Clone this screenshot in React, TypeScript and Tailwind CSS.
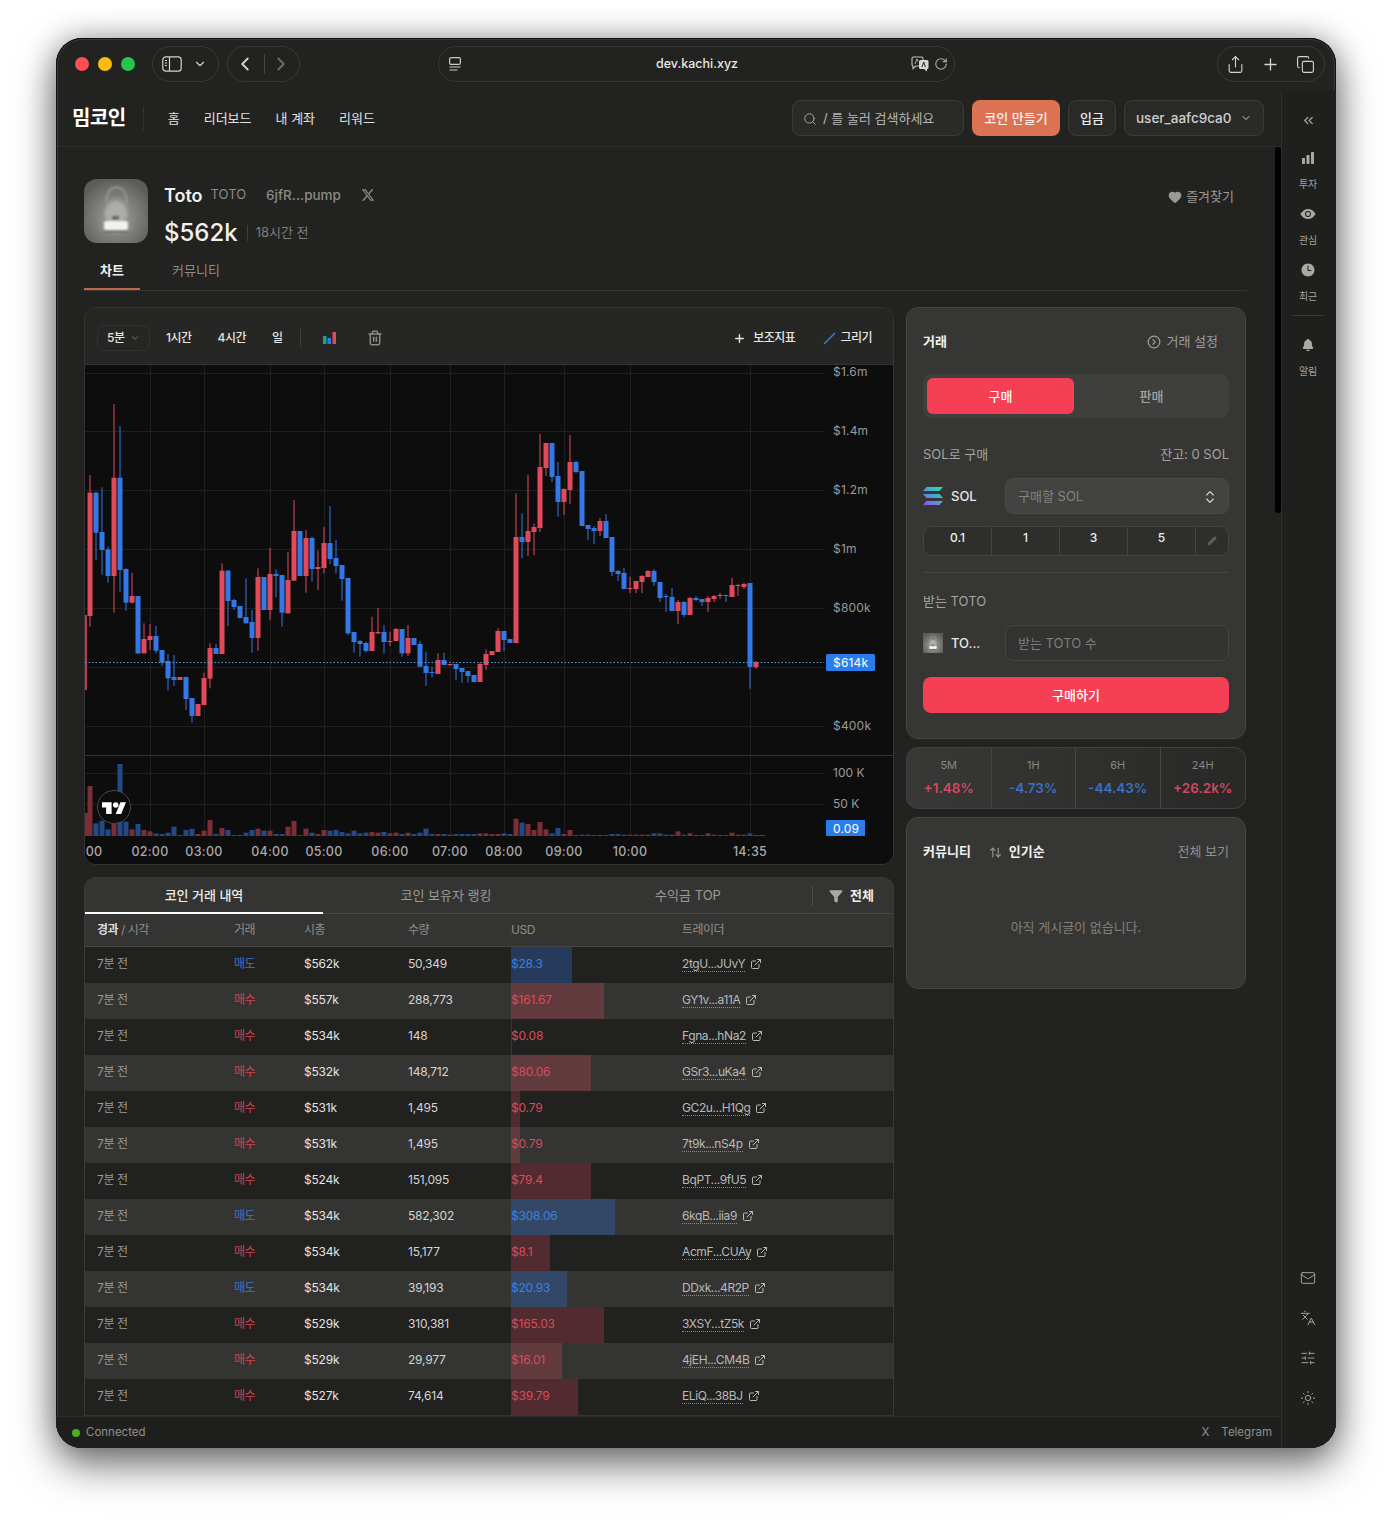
import { useId } from "react";
import {
  ArrowUpDown,
  ChevronDown,
  ChevronLeft,
  ChevronRight,
  ChevronsLeft,
  ChevronsUpDown,
  CircleChevronRight,
  Copy,
  ExternalLink,
  Filter,
  Heart,
  Languages,
  Mail,
  Pencil,
  Plus,
  RotateCw,
  Search,
  Share,
  SlidersHorizontal,
  Sun,
  Trash2,
} from "lucide-react";
import { FaXTwitter } from "react-icons/fa6";
import { IoEye, IoNotifications, IoTime } from "react-icons/io5";

// chart values are taken from a 3x crop: y is (real y - 360) * 3
// [dir, wickTop, bodyTop, bodyBottom, wickBottom, volumeTop]
type Candle = ["r" | "b", number, number, number, number, number];

const candles: Candle[] = [
  ["r", 345, 398, 768, 800, 1278],
  ["b", 395, 398, 518, 600, 1390],
  ["b", 382, 516, 570, 645, 1382],
  ["b", 560, 568, 648, 668, 1408],
  ["r", 132, 353, 648, 758, 1390],
  ["b", 198, 353, 630, 695, 1212],
  ["b", 625, 627, 728, 752, 1385],
  ["r", 638, 708, 728, 730, 1408],
  ["b", 708, 708, 880, 882, 1392],
  ["r", 790, 837, 880, 880, 1410],
  ["r", 792, 828, 840, 870, 1414],
  ["b", 798, 828, 872, 880, 1420],
  ["b", 870, 870, 908, 918, 1422],
  ["b", 882, 903, 955, 992, 1418],
  ["b", 885, 951, 960, 978, 1400],
  ["r", 951, 951, 960, 960, 1425],
  ["b", 950, 951, 1017, 1050, 1410],
  ["b", 1014, 1014, 1068, 1088, 1406],
  ["r", 1032, 1032, 1068, 1068, 1422],
  ["r", 938, 954, 1035, 1035, 1412],
  ["r", 850, 864, 956, 985, 1380],
  ["b", 852, 864, 882, 882, 1422],
  ["r", 610, 632, 882, 882, 1404],
  ["b", 630, 632, 723, 798, 1410],
  ["b", 717, 720, 741, 750, 1425],
  ["b", 738, 738, 774, 775, 1425],
  ["b", 655, 771, 790, 790, 1418],
  ["b", 750, 786, 834, 878, 1410],
  ["r", 625, 651, 834, 872, 1406],
  ["b", 651, 651, 750, 750, 1412],
  ["r", 564, 642, 750, 780, 1412],
  ["b", 628, 642, 648, 712, 1422],
  ["b", 645, 645, 758, 800, 1422],
  ["r", 576, 660, 760, 760, 1400],
  ["r", 420, 513, 662, 662, 1383],
  ["b", 513, 513, 648, 648, 1425],
  ["r", 510, 534, 648, 698, 1406],
  ["b", 530, 534, 627, 665, 1418],
  ["r", 572, 621, 627, 690, 1422],
  ["r", 501, 549, 624, 640, 1410],
  ["b", 438, 549, 597, 612, 1412],
  ["b", 540, 594, 618, 640, 1410],
  ["b", 615, 615, 657, 722, 1416],
  ["b", 654, 654, 820, 825, 1420],
  ["b", 816, 816, 846, 878, 1412],
  ["b", 840, 843, 852, 890, 1420],
  ["b", 846, 849, 873, 878, 1418],
  ["r", 770, 816, 873, 873, 1416],
  ["r", 744, 816, 820, 822, 1418],
  ["b", 795, 816, 846, 880, 1416],
  ["r", 815, 843, 846, 858, 1420],
  ["r", 804, 807, 843, 843, 1418],
  ["b", 807, 807, 880, 890, 1422],
  ["r", 795, 834, 880, 888, 1418],
  ["b", 834, 834, 855, 855, 1422],
  ["b", 843, 852, 920, 922, 1418],
  ["b", 875, 918, 939, 978, 1406],
  ["b", 920, 936, 939, 952, 1422],
  ["r", 880, 900, 942, 942, 1422],
  ["b", 878, 900, 915, 915, 1422],
  ["r", 912, 912, 915, 918, 1424],
  ["b", 912, 912, 927, 960, 1422],
  ["b", 924, 924, 936, 968, 1422],
  ["b", 933, 933, 948, 968, 1422],
  ["b", 945, 945, 966, 966, 1422],
  ["r", 908, 912, 966, 966, 1420],
  ["r", 868, 882, 915, 930, 1420],
  ["r", 873, 873, 885, 885, 1422],
  ["r", 805, 813, 876, 876, 1422],
  ["b", 813, 813, 840, 873, 1420],
  ["b", 837, 837, 849, 849, 1422],
  ["r", 400, 531, 849, 849, 1376],
  ["b", 460, 531, 546, 595, 1388],
  ["r", 345, 513, 546, 588, 1392],
  ["r", 490, 501, 516, 585, 1410],
  ["r", 222, 321, 504, 516, 1386],
  ["r", 249, 249, 324, 348, 1408],
  ["b", 249, 249, 351, 366, 1420],
  ["b", 306, 348, 426, 470, 1404],
  ["r", 385, 387, 426, 465, 1422],
  ["r", 225, 306, 390, 432, 1410],
  ["b", 303, 306, 336, 339, 1425],
  ["b", 333, 333, 498, 498, 1424],
  ["b", 495, 495, 507, 540, 1424],
  ["b", 498, 504, 513, 552, 1425],
  ["r", 474, 483, 513, 528, 1425],
  ["b", 462, 483, 534, 534, 1425],
  ["b", 531, 531, 636, 648, 1422],
  ["b", 630, 633, 642, 663, 1422],
  ["b", 624, 639, 687, 687, 1424],
  ["r", 650, 684, 687, 699, 1424],
  ["r", 663, 663, 687, 699, 1424],
  ["r", 645, 648, 666, 699, 1424],
  ["r", 630, 633, 651, 651, 1424],
  ["b", 627, 633, 666, 678, 1420],
  ["b", 666, 666, 714, 726, 1420],
  ["b", 702, 708, 711, 756, 1424],
  ["b", 684, 711, 753, 753, 1424],
  ["r", 720, 726, 753, 792, 1414],
  ["b", 723, 726, 765, 771, 1424],
  ["r", 711, 714, 765, 765, 1420],
  ["b", 708, 714, 720, 723, 1425],
  ["b", 717, 717, 726, 738, 1425],
  ["r", 708, 714, 726, 756, 1420],
  ["r", 705, 708, 717, 726, 1424],
  ["r", 699, 705, 708, 717, 1425],
  ["b", 705, 705, 708, 726, 1425],
  ["r", 654, 675, 711, 711, 1418],
  ["r", 672, 675, 678, 708, 1424],
  ["r", 669, 672, 681, 687, 1424],
  ["b", 669, 669, 921, 986, 1420],
  ["r", 903, 906, 921, 927, 1425],
];

const trades = [
  ["매도", "$562k", "50,349", "$28.3", 61, "2tgU...JUvY"],
  ["매수", "$557k", "288,773", "$161.67", 93, "GY1v...a11A"],
  ["매수", "$534k", "148", "$0.08", 1, "Fgna...hNa2"],
  ["매수", "$532k", "148,712", "$80.06", 80, "GSr3...uKa4"],
  ["매수", "$531k", "1,495", "$0.79", 9, "GC2u...H1Qg"],
  ["매수", "$531k", "1,495", "$0.79", 9, "7t9k...nS4p"],
  ["매수", "$524k", "151,095", "$79.4", 80, "BqPT...9fU5"],
  ["매도", "$534k", "582,302", "$308.06", 104, "6kqB...iia9"],
  ["매수", "$534k", "15,177", "$8.1", 39, "AcmF...CUAy"],
  ["매도", "$534k", "39,193", "$20.93", 56, "DDxk...4R2P"],
  ["매수", "$529k", "310,381", "$165.03", 93, "3XSY...tZ5k"],
  ["매수", "$529k", "29,977", "$16.01", 51, "4jEH...CM4B"],
  ["매수", "$527k", "74,614", "$39.79", 67, "ELiQ...38BJ"],
] as const;

const stats = [
  ["5M", "+1.48%", "text-[#d2485f]"],
  ["1H", "-4.73%", "text-[#3c6fc4]"],
  ["6H", "-44.43%", "text-[#3c6fc4]"],
  ["24H", "+26.2k%", "text-[#d2485f]"],
];

const priceLabels: [string, number][] = [
  ["$1.6m", 372],
  ["$1.4m", 431],
  ["$1.2m", 490],
  ["$1m", 549],
  ["$800k", 608],
  ["$400k", 726],
];
const timeLabels: [string, number][] = [
  ["00", 94],
  ["02:00", 150],
  ["03:00", 204],
  ["04:00", 270],
  ["05:00", 324],
  ["06:00", 390],
  ["07:00", 450],
  ["08:00", 504],
  ["09:00", 564],
  ["10:00", 630],
  ["14:35", 750],
];
const gridX = [150, 204, 270, 324, 390, 450, 504, 564, 630, 750];
const gridY = [373, 431, 490, 549, 608, 667, 726];

const toX = (zx: number) => 84 + zx / 3 - 85;
const toY = (zy: number) => zy / 3 - 5;

function Chart() {
  return (
    <svg width="808" height="499" className="block bg-[#0d0d0e]">
      {gridY.map((y) => (
        <line key={y} x1="0" x2="739" y1={y - 364.5} y2={y - 364.5} stroke="#1f1f20" />
      ))}
      {[773, 804].map((y) => (
        <line key={y} x1="0" x2="739" y1={y - 364.5} y2={y - 364.5} stroke="#1f1f20" />
      ))}
      {gridX.map((x) => (
        <line key={x} x1={x - 84.5} x2={x - 84.5} y1="0" y2="471" stroke="#1f1f20" />
      ))}
      <line x1="0" x2="808" y1="390.5" y2="390.5" stroke="#333334" />

      {/* cut off first candle at the left edge */}
      <rect x="0" y="250" width="2" height="75" fill="#e24a5c" opacity="0.8" />
      <rect x="0" y="448" width="3" height="23" fill="#7a2f37" />

      {candles.map(([dir, wt, bt, bb, wb, vt], i) => {
        const zx = 19 + i * 18;
        const x = Math.round(toX(zx));
        const fill = dir === "r" ? "#e24a5c" : "#3378e6";
        return (
          <g key={i}>
            <rect x={x - 0.5} y={toY(wt)} width="1" height={(wb - wt) / 3} fill={fill} />
            <rect x={x - 2.5} y={toY(bt)} width="5" height={Math.max((bb - bt) / 3, 1)} fill={fill} />
            <rect
              x={x - 2.5}
              y={toY(vt)}
              width="5"
              height={(1428 - vt) / 3}
              fill={dir === "r" ? "#7a2f37" : "#224a85"}
            />
          </g>
        );
      })}
      <rect x="674" y="470" width="6" height="1" fill="#224a85" />

      <line x1="0" x2="739" y1="297.5" y2="297.5" stroke="#5aa0dc" strokeDasharray="1.5 2" />

      {priceLabels.map(([t, y]) => (
        <text key={t} x="748" y={y - 365 + 4} fill="#9a9a9a" fontSize="12" letterSpacing="0.2">
          {t}
        </text>
      ))}
      <rect x="741" y="289" width="49" height="17" rx="1.5" fill="#2a7de9" />
      <text x="748" y="302" fill="#fff" fontSize="12" letterSpacing="0.2">
        $614k
      </text>
      <text x="748" y="412" fill="#9a9a9a" fontSize="12">
        100 K
      </text>
      <text x="748" y="443" fill="#9a9a9a" fontSize="12">
        50 K
      </text>
      <rect x="741" y="455" width="39" height="16" fill="#2a7de9" />
      <text x="748" y="468" fill="#fff" fontSize="12" letterSpacing="0.2">
        0.09
      </text>

      {timeLabels.map(([t, x]) => (
        <text
          key={t}
          x={x - 85}
          y="491"
          fill="#a8a8a8"
          fontSize="12.5"
          fontWeight="500"
          letterSpacing="0.3"
          textAnchor="middle"
        >
          {t}
        </text>
      ))}

      {/* tradingview mark */}
      <circle cx="29" cy="442" r="16.5" fill="#0d0d0e" stroke="#4a4a4c" />
      <svg x="17" y="436" width="24" height="13" viewBox="0 0 35 19">
        <path d="M14 2H0v7.5h6V19h8V2z" fill="#fff" />
        <path d="M28 19h-8l7-17h8l-7 17z" fill="#fff" />
        <circle cx="20" cy="6" r="4" fill="#fff" />
      </svg>
    </svg>
  );
}

// token picture: a blurry grey shape on grey
function TokenAvatar({ size, radius }: { size: number; radius: number }) {
  const id = useId();
  return (
    <svg width={size} height={size} viewBox="0 0 64 64" className="shrink-0">
      <defs>
        <radialGradient id={`${id}bg`} cx="50%" cy="60%" r="62%">
          <stop offset="0" stopColor="#a4a4a0" />
          <stop offset="0.55" stopColor="#7c7c78" />
          <stop offset="1" stopColor="#5c5c58" />
        </radialGradient>
        <filter id={`${id}blur`}>
          <feGaussianBlur stdDeviation="1.6" />
        </filter>
        <filter id={`${id}soft`}>
          <feGaussianBlur stdDeviation="0.8" />
        </filter>
        <clipPath id={`${id}clip`}>
          <rect width="64" height="64" rx={radius} />
        </clipPath>
      </defs>
      <g clipPath={`url(#${id}clip)`}>
        <rect width="64" height="64" fill={`url(#${id}bg)`} />
        <g filter={`url(#${id}blur)`}>
          <path d="M23 22c5-5 14-5 19 0l6 30H16z" fill="#8f8f8b" opacity="0.75" />
          <ellipse cx="32" cy="34" rx="11" ry="12" fill="#b5b5b1" opacity="0.75" />
        </g>
        <g filter={`url(#${id}soft)`}>
          <path d="M22 24C22 3 43 3 43 24" fill="none" stroke="#a3a39f" strokeWidth="1.4" />
          <rect x="28" y="37" width="7" height="4" fill="#6a6a66" />
          <rect x="20" y="42" width="24" height="9" rx="2" fill="#f2f2ef" />
          <rect x="20" y="51" width="24" height="1.500" fill="#55554f" />
        </g>
      </g>
    </svg>
  );
}

function SolanaIcon() {
  const id = useId();
  return (
    <svg width="20" height="20" viewBox="0 0 20 20" className="shrink-0">
      <defs>
        <linearGradient id={id} x1="0" y1="1" x2="1" y2="0">
          <stop offset="0" stopColor="#9945ff" />
          <stop offset="0.5" stopColor="#4e9fd6" />
          <stop offset="1" stopColor="#14f195" />
        </linearGradient>
      </defs>
      <path d="M3.5 1H20l-3.5 4H0z M0 8h16.5l3.5 4H3.5z M3.5 15H20l-3.5 4H0z" fill={`url(#${id})`} />
    </svg>
  );
}

function BarsIcon({ className }: { className?: string }) {
  return (
    <svg width="14" height="14" viewBox="0 0 14 14" className={className} fill="currentColor">
      <rect x="1" y="7" width="3" height="6" rx="0.7" />
      <rect x="5.5" y="4" width="3" height="9" rx="0.7" />
      <rect x="10" y="1" width="3" height="12" rx="0.7" />
    </svg>
  );
}

function SidebarIcon() {
  return (
    <svg width="20" height="16" viewBox="0 0 20 16" fill="none" stroke="currentColor" strokeWidth="1.2">
      <rect x="0.8" y="0.8" width="18.400" height="14.400" rx="3" />
      <path d="M7.500 1v14" />
      <path d="M3 4.500h2M3 7h2M3 9.500h2" strokeWidth="1" />
    </svg>
  );
}

function PageMenuIcon() {
  return (
    <svg width="14" height="16" viewBox="0 0 14 16" fill="none" stroke="#c9c9c7" strokeWidth="1.2">
      <rect x="1.6" y="1.6" width="10.8" height="6.8" rx="1.5" />
      <path d="M1.5 11h11M1.5 14h8" />
    </svg>
  );
}

function TranslateIcon() {
  return (
    <svg width="20" height="16" viewBox="0 0 20 16">
      <path d="M2 2.5a1.5 1.5 0 0 1 1.5-1.5h8A1.5 1.5 0 0 1 13 2.5v6A1.5 1.5 0 0 1 11.5 10H6l-3 2.5V10A1.500 1.500 0 0 1 2 8.500z" fill="none" stroke="#c2c2c0" strokeWidth="1.1" />
      <path d="M9 5.500a1.5 1.5 0 0 1 1.5-1.500H17a1.500 1.500 0 0 1 1.500 1.500v6A1.500 1.500 0 0 1 17 13v2.500L14 13h-3.500A1.500 1.500 0 0 1 9 11.500z" fill="#d6d6d4" />
      <path d="M12 11l1.700-5 1.700 5" fill="none" stroke="#222220" strokeWidth="1" />
      <path d="M5 8l2-5 1 2.500" fill="none" stroke="#c2c2c0" strokeWidth="0.9" />
    </svg>
  );
}

function SideItem({ icon, label }: { icon: React.ReactNode; label: string }) {
  return (
    <div className="flex h-14 flex-col items-center pt-[5px] text-[#a9a9a6]">
      <div className="flex h-[16px] items-center">{icon}</div>
      <span className="mt-[12px] text-[10px] leading-[12px] tracking-[-0.3px] text-[#a3a3a0]">{label}</span>
    </div>
  );
}

function TradeRow({ row, odd }: { row: (typeof trades)[number]; odd: boolean }) {
  const [side, mcap, qty, usd, bar, trader] = row;
  const isBuy = side === "매수";
  return (
    <div
      className={`grid h-9 grid-cols-[137px_70px_104px_103px_171px_1fr] items-center pl-3 text-[12px] tracking-[-0.2px] ${
        odd ? "bg-[#343432]" : "bg-[#212120]"
      }`}
    >
      <span className="mb-[2px] tracking-[-0.4px] text-[#9a9a97]">7분 전</span>
      <span className={`mb-[2px] tracking-[-0.5px] ${isBuy ? "text-[#c9444f]" : "text-[#3c74c8]"}`}>{side}</span>
      <span className="mb-[2px] text-[#e4e4e2]">{mcap}</span>
      <span className="mb-[2px] text-[#d4d4d2]">{qty}</span>
      <div className="relative flex h-full items-center pb-[2px]">
        <div
          className={`absolute inset-y-0 left-0 ${isBuy ? "bg-[#e24a5c]/25" : "bg-[#3378e6]/30"}`}
          style={{ width: bar }}
        />
        <span className={`relative ${isBuy ? "text-[#dd4a5a]" : "text-[#3c7fe0]"}`}>{usd}</span>
      </div>
      <div className="mb-[2px] flex items-center gap-[5px] tracking-[-0.4px] text-[#b9b9b6]">
        <span className="border-b border-dotted border-[#8a8a87] leading-[14px]">{trader}</span>
        <ExternalLink size={12} />
      </div>
    </div>
  );
}

export default function App() {
  return (
    <div className="h-[1522px] w-[1392px] overflow-hidden bg-white pl-[56px] pt-[38px] font-['Inter','Noto_Sans_CJK_KR',sans-serif]">
      <div className="flex h-[1410px] w-[1280px] flex-col overflow-hidden rounded-[26px] bg-[#222220] shadow-[inset_0_0_0_1px_#0f0f0f,inset_0_0_0_2px_#3a3a38,0_18px_40px_rgba(0,0,0,0.5),0_0_30px_rgba(0,0,0,0.3)]">
        {/* browser chrome */}
        <div className="flex h-[52px] shrink-0 items-center text-[#d4d4d2]">
          <div className="ml-[19px] flex gap-[9px]">
            <span className="size-[14px] rounded-full bg-[#fb5056]" />
            <span className="size-[14px] rounded-full bg-[#fcbc0f]" />
            <span className="size-[14px] rounded-full bg-[#28c44e]" />
          </div>
          <div className="ml-[17px] flex h-9 w-[67px] items-center rounded-full border border-[#393937] pl-[9px]">
            <SidebarIcon />
            <ChevronDown size={14} className="ml-[11px]" />
          </div>
          <div className="ml-2 flex h-9 w-[73px] items-center rounded-full border border-[#393937] pl-[6px]">
            <ChevronLeft size={22} />
            <span className="ml-[8px] mr-[5px] h-[20px] w-px bg-[#454543]" />
            <ChevronRight size={22} className="text-[#6f6f6d]" />
          </div>
          <div className="ml-[138px] flex h-9 w-[517px] items-center rounded-full border border-[#393937] pl-[9px] pr-[6px]">
            <PageMenuIcon />
            <span className="flex-1 pl-[22px] pt-px text-center text-[12.5px] font-medium text-[#e8e8e6]">dev.kachi.xyz</span>
            <TranslateIcon />
            <RotateCw size={14} className="ml-[4px] text-[#a8a8a6]" />
          </div>
          <div className="ml-auto mr-[11px] flex h-9 w-[108px] items-center justify-between rounded-full border border-[#393937] pl-[8px] pr-[9px]">
            <Share size={19} strokeWidth={1.4} />
            <Plus size={19} strokeWidth={1.6} />
            <Copy size={19} strokeWidth={1.4} />
          </div>
        </div>

        <div className="flex min-h-0 flex-1">
          <div className="flex min-w-0 flex-1 flex-col">
            {/* site nav */}
            <div className="flex h-[57px] shrink-0 items-center border-b border-[#2e2e2c] pl-4 pr-[17px]">
              <span className="text-[20px] font-bold tracking-[-0.5px] text-white">밈코인</span>
              <span className="ml-[17px] h-6 w-px bg-[#333331]" />
              <nav className="ml-6 mt-[2px] flex gap-6 text-[13px] text-[#e2e2e0]">
                <span>홈</span>
                <span>리더보드</span>
                <span>내 계좌</span>
                <span>리워드</span>
              </nav>
              <div className="ml-auto flex items-center gap-2">
                <div className="flex h-9 w-[172px] items-center gap-[6px] rounded-lg border border-[#393937] bg-[#2a2a28] pl-[10px] pt-px text-[13px] text-[#b5b5b3]">
                  <Search size={14} strokeWidth={1.5} />
                  <span>/ 를 눌러 검색하세요</span>
                </div>
                <div className="flex h-9 w-[88px] items-center justify-center rounded-lg bg-[#db7353] pt-px text-[13px] font-medium text-[#fdf0ea]">
                  코인 만들기
                </div>
                <div className="flex h-9 w-12 items-center justify-center rounded-lg border border-[#393937] bg-[#2a2a28] pt-px text-[13px] font-medium text-[#ededeb]">
                  입금
                </div>
                <div className="flex h-9 w-[140px] items-center gap-[9px] rounded-lg border border-[#393937] bg-[#2a2a28] pl-[11px] text-[13.5px] font-medium text-[#cfcfcd]">
                  <span>user_aafc9ca0</span>
                  <ChevronDown size={12} />
                </div>
              </div>
            </div>

            {/* page */}
            <div className="relative min-h-0 flex-1 overflow-hidden pl-7 pr-[34px] pt-8">
              <div className="absolute right-0 top-0 h-[366px] w-[6px] rounded-full bg-black" />

              <div className="flex h-16 items-start gap-4">
                <TokenAvatar size={64} radius={13} />
                <div className="flex flex-col">
                  <div className="flex h-8 items-center">
                    <span className="text-[18px] font-semibold text-[#f0f0ee]">Toto</span>
                    <span className="ml-[8px] text-[13px] text-[#8a8a87]">TOTO</span>
                    <span className="ml-5 text-[13.5px] font-medium text-[#8a8a87]">6jfR...pump</span>
                    <FaXTwitter size={14} className="ml-5 text-[#8a8a87]" />
                  </div>
                  <div className="mt-2 flex h-7 items-center">
                    <span className="text-[24px] font-medium leading-none text-[#f0f0ee]">$562k</span>
                    <span className="ml-[9px] h-[16px] w-px bg-[#3f3f3d]" />
                    <span className="ml-2 text-[13px] text-[#7e7e7b]">18시간 전</span>
                  </div>
                </div>
                <div className="ml-auto mr-[13px] mt-2 flex items-center gap-[4px] text-[13px] text-[#9a9a97]">
                  <Heart size={14} fill="currentColor" />
                  <span>즐겨찾기</span>
                </div>
              </div>

              <div className="mt-[19px] flex h-[29px] items-start border-b border-[#353533] text-[13px] leading-4">
                <div className="h-[28px] w-14 border-b-2 border-[#c4664d] text-center font-semibold text-[#efefed]">
                  차트
                </div>
                <div className="ml-8 text-[#8a8a87]">커뮤니티</div>
              </div>

              <div className="mt-4 flex items-start gap-3">
                <div className="flex w-[810px] shrink-0 flex-col gap-3">
                  {/* chart */}
                  <div className="overflow-hidden rounded-xl border border-[#343432]">
                    <div className="flex h-[57px] items-center border-b border-[#333331] bg-[#262624] pl-3 pr-[21px] pt-1 text-[12px] font-medium tracking-[-0.5px] text-[#e4e4e2]">
                      <div className="flex h-[26px] w-[53px] items-center gap-[6px] rounded-lg border border-[#333331] pl-[9px]">
                        5분
                        <ChevronDown size={10} className="text-[#8a8a87]" />
                      </div>
                      <span className="ml-4">1시간</span>
                      <span className="ml-[26px]">4시간</span>
                      <span className="ml-[26px]">일</span>
                      <span className="ml-[17px] h-[18px] w-px bg-[#3f3f3d]" />
                      <svg width="13" height="12" viewBox="0 0 13 12" className="ml-[22px]">
                        <rect x="0" y="4" width="3.500" height="8" fill="#1f9e8a" />
                        <rect x="4.500" y="6" width="3.500" height="6" fill="#3378e6" />
                        <rect x="9.500" y="0" width="3.500" height="12" fill="#e24a5c" />
                      </svg>
                      <Trash2 size={16} strokeWidth={2.2} className="ml-[31px] text-[#8a8a87]" />
                      <div className="ml-auto flex items-center gap-[7px]">
                        <Plus size={13} strokeWidth={2.6} />
                        보조지표
                      </div>
                      <div className="ml-7 flex items-center gap-[4px]">
                        <svg width="13" height="13" viewBox="0 0 13 13">
                          <path d="M1 12 12 1" stroke="#2f7fe0" strokeWidth="1.5" />
                        </svg>
                        그리기
                      </div>
                    </div>
                    <Chart />
                  </div>

                  {/* trades */}
                  <div className="overflow-hidden rounded-t-xl border-x border-t border-[#3a3a38] bg-[#343432]">
                    <div className="flex h-[36px] items-center border-b border-[#454543] pt-px text-[13px] text-[#9a9a97]">
                      <div className="relative flex h-full w-[238px] items-center justify-center font-medium text-[#ececea]">
                        코인 거래 내역
                        <span className="absolute inset-x-0 -bottom-px h-[2px] bg-white" />
                      </div>
                      <div className="flex h-full w-[246px] items-center justify-center">코인 보유자 랭킹</div>
                      <div className="flex h-full w-[238px] items-center justify-center">수익금 TOP</div>
                      <span className="ml-[5px] h-[20px] w-px bg-[#4c4c4a]" />
                      <Filter size={14} fill="#a8a8a6" className="ml-[16px] text-[#a8a8a6]" />
                      <span className="ml-[7px] font-semibold text-[#ececea]">전체</span>
                    </div>
                    <div className="grid h-[33px] grid-cols-[137px_70px_104px_103px_171px_1fr] items-center border-b border-[#454543] pl-3 text-[12px] tracking-[-0.5px] text-[#8f8f8c]">
                      <span>
                        <b className="font-semibold text-[#dededc]">경과</b> / 시각
                      </span>
                      <span>거래</span>
                      <span>시총</span>
                      <span>수량</span>
                      <span>USD</span>
                      <span>트레이더</span>
                    </div>
                    {trades.map((row, i) => (
                      <TradeRow key={i} row={row} odd={i % 2 === 1} />
                    ))}
                    <div className="h-4 bg-[#343432]" />
                  </div>
                </div>

                {/* right column */}
                <div className="flex w-[340px] shrink-0 flex-col gap-2">
                  <div className="rounded-xl border border-[#454543] bg-[#363634] px-4 pb-[25px] text-[13px]">
                    <div className="flex h-[66px] items-center justify-between pr-[11px] pt-[2px]">
                      <span className="font-semibold text-[#f0f0ee]">거래</span>
                      <div className="flex items-center gap-[6px] text-[#9f9f9c]">
                        <CircleChevronRight size={14} />
                        거래 설정
                      </div>
                    </div>
                    <div className="flex h-11 items-center rounded-lg bg-[#3f3f3d] p-1">
                      <div className="flex h-9 w-[147px] items-center justify-center rounded-md bg-[#f43f55] pt-px font-medium text-white">
                        구매
                      </div>
                      <div className="flex-1 pl-1 pt-px text-center font-medium text-[#a3a3a0]">판매</div>
                    </div>
                    <div className="mt-[27px] flex h-[18px] items-center justify-between pt-[2px] text-[#a3a3a0]">
                      <span>SOL로 구매</span>
                      <span>잔고: 0 SOL</span>
                    </div>
                    <div className="mt-[15px] flex h-9 items-center">
                      <SolanaIcon />
                      <span className="ml-2 w-[54px] pt-px font-medium text-[#e8e8e6]">SOL</span>
                      <div className="flex h-9 flex-1 items-center justify-between rounded-lg border border-[#4a4a48] bg-[#424240] pl-3 pr-[10px] pt-px text-[#84847f]">
                        구매할 SOL
                        <ChevronsUpDown size={16} strokeWidth={1.6} className="text-[#dcdcda]" />
                      </div>
                    </div>
                    <div className="mt-3 flex h-[30px] rounded-lg border border-[#444442] bg-[#2e2e2c] text-[12px] font-medium text-[#ededeb]">
                      {["0.1", "1", "3", "5"].map((v) => (
                        <div key={v} className="w-[68px] border-r border-[#444442] pt-[2px] text-center">
                          {v}
                        </div>
                      ))}
                      <div className="flex flex-1 items-center justify-center">
                        <Pencil size={10} fill="#5f5f5c" className="text-[#5f5f5c]" />
                      </div>
                    </div>
                    <div className="mt-4 border-t border-[#444442]" />
                    <div className="mt-5 h-4 leading-4 text-[#a3a3a0]">받는 TOTO</div>
                    <div className="mt-4 flex h-9 items-center">
                      <TokenAvatar size={20} radius={0} />
                      <span className="ml-2 w-[54px] pt-px font-medium text-[#e8e8e6]">TO...</span>
                      <div className="flex h-9 flex-1 items-center rounded-lg border border-[#454543] bg-[#333331] pl-3 pt-px text-[#7d7d79]">
                        받는 TOTO 수
                      </div>
                    </div>
                    <div className="mt-4 flex h-9 items-center justify-center rounded-lg bg-[#f43f55] pt-px font-medium text-white">
                      구매하기
                    </div>
                  </div>

                  <div className="grid h-[62px] grid-cols-4 overflow-hidden rounded-xl border border-[#414141] bg-linear-to-r from-[#383836] to-[#282826]">
                    {stats.map(([k, v, color], i) => (
                      <div
                        key={k}
                        className={`flex flex-col items-center pt-[10px] ${i < 3 ? "border-r border-[#454543]" : ""}`}
                      >
                        <span className="text-[11px] leading-[14px] text-[#878784]">{k}</span>
                        <span className={`mt-[7px] text-[13.5px] font-semibold leading-[18px] ${color}`}>{v}</span>
                      </div>
                    ))}
                  </div>

                  <div className="h-[172px] rounded-xl border border-[#454543] bg-[#363634] px-4 text-[13px]">
                    <div className="flex h-[66px] items-center pt-[2px]">
                      <span className="font-semibold text-[#f0f0ee]">커뮤니티</span>
                      <ArrowUpDown size={13} className="ml-[18px] text-[#9a9a97]" />
                      <span className="ml-[7px] font-semibold text-[#f0f0ee]">인기순</span>
                      <span className="ml-auto text-[#8f8f8c]">전체 보기</span>
                    </div>
                    <div className="mt-[34px] text-center text-[#80807d]">아직 게시글이 없습니다.</div>
                  </div>
                </div>
              </div>
            </div>

            {/* status bar */}
            <div className="flex h-8 shrink-0 items-center border-t border-[#2c2c2a] bg-[#1f1f1d] pl-4 pr-[9px] text-[11.5px] text-[#8f8f8c]">
              <span className="size-2 rounded-full bg-[#4caf1f]" />
              <span className="ml-[6px]">Connected</span>
              <span className="ml-auto">X</span>
              <span className="ml-3">Telegram</span>
            </div>
          </div>

          {/* right rail */}
          <aside className="flex w-[55px] shrink-0 flex-col items-center rounded-tl-sm border-l border-[#2e2e2c] bg-[#1f1f1d] pb-[42px] pr-[2px] pt-[23px] text-[#a9a9a6]">
            <ChevronsLeft size={15} />
            <div className="mt-[17px]">
              <SideItem icon={<BarsIcon />} label="투자" />
              <SideItem icon={<IoEye size={16} />} label="관심" />
              <SideItem icon={<IoTime size={16} />} label="최근" />
            </div>
            <div className="my-[2px] h-px w-8 bg-[#3a3a38]" />
            <div className="mt-[14px]">
              <SideItem icon={<IoNotifications size={14} />} label="알림" />
            </div>
            <div className="mt-auto flex flex-col items-center gap-6">
              <Mail size={16} strokeWidth={1.4} />
              <Languages size={16} strokeWidth={1.4} />
              <SlidersHorizontal size={16} strokeWidth={1.4} />
              <Sun size={16} strokeWidth={1.4} />
            </div>
          </aside>
        </div>
      </div>
    </div>
  );
}
